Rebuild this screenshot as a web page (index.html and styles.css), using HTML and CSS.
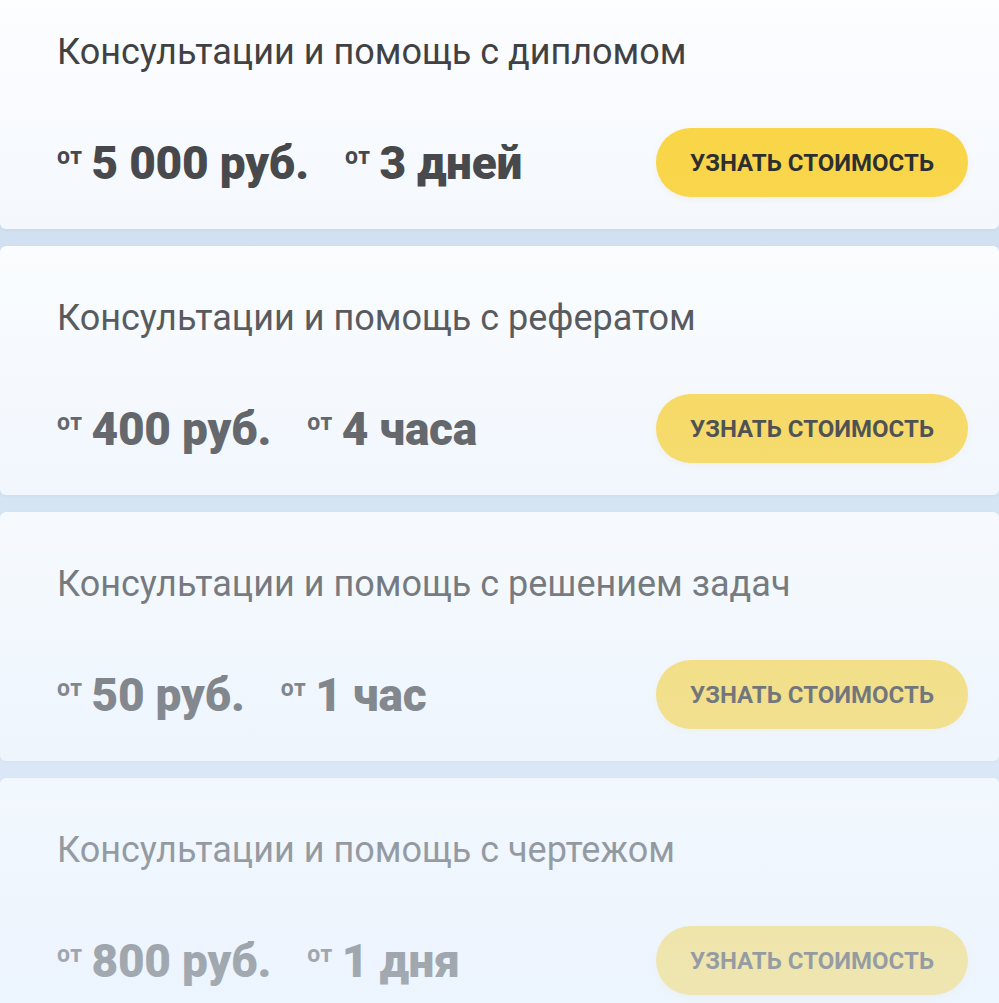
FILE: index.html
```html
<!DOCTYPE html>
<html lang="ru">
<head>
  <meta charset="UTF-8">
  <meta name="viewport" content="width=device-width, initial-scale=1.0">
  <title>Консультации и помощь</title>
  <link rel="stylesheet" href="styles.css">
</head>
<body>
  <div class="services">
    <div class="service">
      <div class="service-title">Консультации и помощь с дипломом</div>
      <div class="service-row">
        <div class="terms">
          <span class="term"><small>от</small>5 000 руб.</span>
          <span class="term"><small>от</small>3 дней</span>
        </div>
        <button class="price-btn">Узнать стоимость</button>
      </div>
    </div>

    <div class="service">
      <div class="service-title">Консультации и помощь с рефератом</div>
      <div class="service-row">
        <div class="terms">
          <span class="term"><small>от</small>400 руб.</span>
          <span class="term"><small>от</small>4 часа</span>
        </div>
        <button class="price-btn">Узнать стоимость</button>
      </div>
    </div>

    <div class="service">
      <div class="service-title">Консультации и помощь с решением задач</div>
      <div class="service-row">
        <div class="terms">
          <span class="term"><small>от</small>50 руб.</span>
          <span class="term"><small>от</small>1 час</span>
        </div>
        <button class="price-btn">Узнать стоимость</button>
      </div>
    </div>

    <div class="service">
      <div class="service-title">Консультации и помощь с чертежом</div>
      <div class="service-row">
        <div class="terms">
          <span class="term"><small>от</small>800 руб.</span>
          <span class="term"><small>от</small>1 дня</span>
        </div>
        <button class="price-btn">Узнать стоимость</button>
      </div>
    </div>
  </div>
</body>
</html>
```

FILE: styles.css
```css
:root {
  --strip: #cfdff0;
  --card-top: #fdfeff;
  --card-bottom: #f6f9fd;
  --text: #3b3c3e;
  --btn: #fbd33c;
  --fade: 230, 241, 253;
}

body {
  margin: 0;
  background: var(--strip);
  font-family: Roboto, "Liberation Sans", sans-serif;
  color: var(--text);
  overflow: hidden;
}

.services {
  position: relative;
  display: flex;
  flex-direction: column;
  gap: 17px;
  margin-top: -20px;
}

/* the list dissolves towards the bottom of the screen */
.services::after {
  content: "";
  position: absolute;
  inset: 0;
  background: linear-gradient(to bottom,
    rgba(var(--fade), 0) 0,
    rgba(var(--fade), 0.08) 200px,
    rgba(var(--fade), 0.62) 1023px);
  pointer-events: none;
}

.service {
  height: 249px;
  box-sizing: border-box;
  padding: 51px 31px 32px 57px;
  display: flex;
  flex-direction: column;
  justify-content: space-between;
  background: linear-gradient(to bottom, var(--card-top), var(--card-bottom));
  border-radius: 6px;
  box-shadow: 0 1px 3px rgba(120, 150, 190, 0.15);
}

.service-title {
  font-size: 36px;
  line-height: 42px;
  font-weight: 400;
}

.service-row {
  display: flex;
  align-items: center;
  justify-content: space-between;
}

.terms {
  display: flex;
  gap: 36px;
}

.term {
  font-size: 46px;
  font-weight: 900;
  line-height: 52px;
  letter-spacing: -0.2px;
}

.term small {
  font-size: 23px;
  font-weight: 700;
  vertical-align: top;
  line-height: 40px;
  margin-right: 9px;
  letter-spacing: 0.5px;
}

.price-btn {
  width: 312px;
  height: 69px;
  border: none;
  border-radius: 35px;
  background: var(--btn);
  color: #1f1f1f;
  font-family: Roboto, "Liberation Sans", sans-serif;
  font-size: 24px;
  font-weight: 700;
  text-transform: uppercase;
  cursor: pointer;
  box-shadow: 0 2px 6px rgba(200, 170, 60, 0.12);
}
```
